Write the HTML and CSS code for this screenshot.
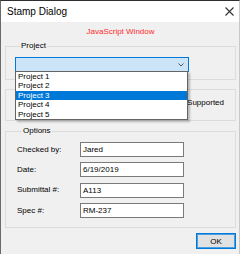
FILE: index.html
```html
<!DOCTYPE html>
<html>
<head>
<meta charset="utf-8">
<link rel="stylesheet" href="styles.css">
</head>
<body>
<div class="window">
  <div class="titlebar">
    <span class="title">Stamp Dialog</span>
    <svg class="close" width="9" height="9" viewBox="0 0 9 9"><path d="M0.5 0.5L8.5 8.5M8.5 0.5L0.5 8.5" stroke="#333" stroke-width="1.1" fill="none"/></svg>
  </div>
  <div class="body">
    <div class="note">JavaScript Window</div>
    <fieldset class="group group-project">
      <legend>Project</legend>
      <div class="combo-wrap">
        <div class="combo">
          <svg class="chev" width="6" height="4" viewBox="0 0 6 4"><path d="M0.5 0.5L3 3L5.5 0.5" stroke="#555" stroke-width="1" fill="none"/></svg>
        </div>
        <ul class="dropdown">
          <li>Project 1</li>
          <li>Project 2</li>
          <li class="selected">Project 3</li>
          <li>Project 4</li>
          <li>Project 5</li>
        </ul>
      </div>
    </fieldset>
    <fieldset class="group group-stamp">
      <legend>Stamp</legend>
      <div class="stamp-msg">Custom Stamps Not Supported</div>
    </fieldset>
    <fieldset class="group group-options">
      <legend>Options</legend>
      <div class="form">
        <label class="lbl">Checked by:</label><div class="input">Jared</div>
        <label class="lbl">Date:</label><div class="input">6/19/2019</div>
        <label class="lbl">Submittal #:</label><div class="input">A113</div>
        <label class="lbl">Spec #:</label><div class="input">RM-237</div>
      </div>
    </fieldset>
    <div class="actions"><button class="ok">OK</button></div>
  </div>
</div>
</body>
</html>
```
FILE: styles.css
```css
* { box-sizing: border-box; }
html, body { margin: 0; padding: 0; }
body {
  font-family: "Liberation Sans", Arial, sans-serif;
  font-size: 8px;
  color: #000;
  background: #f0f0f0;
}
.window {
  width: 240px;
  height: 254px;
  border-top: 1px solid #2f2f2f;
  border-left: 1px solid #6a6a6a;
  border-right: 1px solid #c8c8c8;
  background: #f0f0f0;
  overflow: hidden;
}
.titlebar {
  height: 21px;
  background: #fff;
  display: flex;
  align-items: center;
  justify-content: space-between;
  padding: 0 5px 0 6px;
}
.title {
  font-size: 10px;
  color: #000;
}
.close { display: block; }
.body {
  padding: 5px 3px 0 4px;
}
.note {
  text-align: center;
  color: #ff2a2a;
  line-height: 10px;
  height: 10px;
}
.group {
  margin: 0;
  border: 1px solid #dcdcdc;
  min-width: 0;
}
.group legend {
  padding: 0 1px;
  margin-left: 5px;
  line-height: 10px;
}
.group-project {
  margin-top: 4px;
  padding: 6px 9px 7px 9px;
}
.combo-wrap { position: relative; }
.combo {
  width: 174px;
  height: 15px;
  background: #cce4f7;
  border: 1px solid #0078d7;
  display: flex;
  align-items: center;
  justify-content: flex-end;
  padding-right: 4px;
}
.chev { display: block; }
.dropdown {
  position: absolute;
  left: 0;
  top: 14px;
  width: 173px;
  margin: 0;
  padding: 0;
  list-style: none;
  background: #fff;
  border: 1px solid #646464;
  box-shadow: 2px 2px 2px rgba(0,0,0,0.25);
  z-index: 2;
}
.dropdown li {
  height: 9.4px;
  line-height: 9.4px;
  padding-left: 2px;
}
.dropdown li.selected {
  background: #0078d7;
  color: #fff;
}
.group-stamp {
  margin-top: 4px;
  padding: 4px 11px 12px 9px;
}
.stamp-msg {
  line-height: 10px;
  text-align: right;
}
.group-options {
  margin-top: 5px;
  padding: 6px 9px 9px 11px;
}
.form {
  display: grid;
  grid-template-columns: 63px 104px;
  row-gap: 5.4px;
  align-items: center;
}
.lbl { line-height: 10px; }
.input {
  height: 15px;
  background: #fff;
  border: 1px solid #7a7a7a;
  line-height: 13px;
  padding-left: 2px;
}
.actions {
  display: flex;
  justify-content: flex-end;
  padding: 5px 0 0 0;
}
.ok {
  width: 40px;
  height: 16px;
  padding: 0;
  margin: 0;
  font-family: "Liberation Sans", Arial, sans-serif;
  font-size: 8px;
  color: #000;
  background: #e1e1e1;
  border: 1px solid #0078d7;
  box-shadow: inset 0 0 0 1px #4a9ee3;
}
```
